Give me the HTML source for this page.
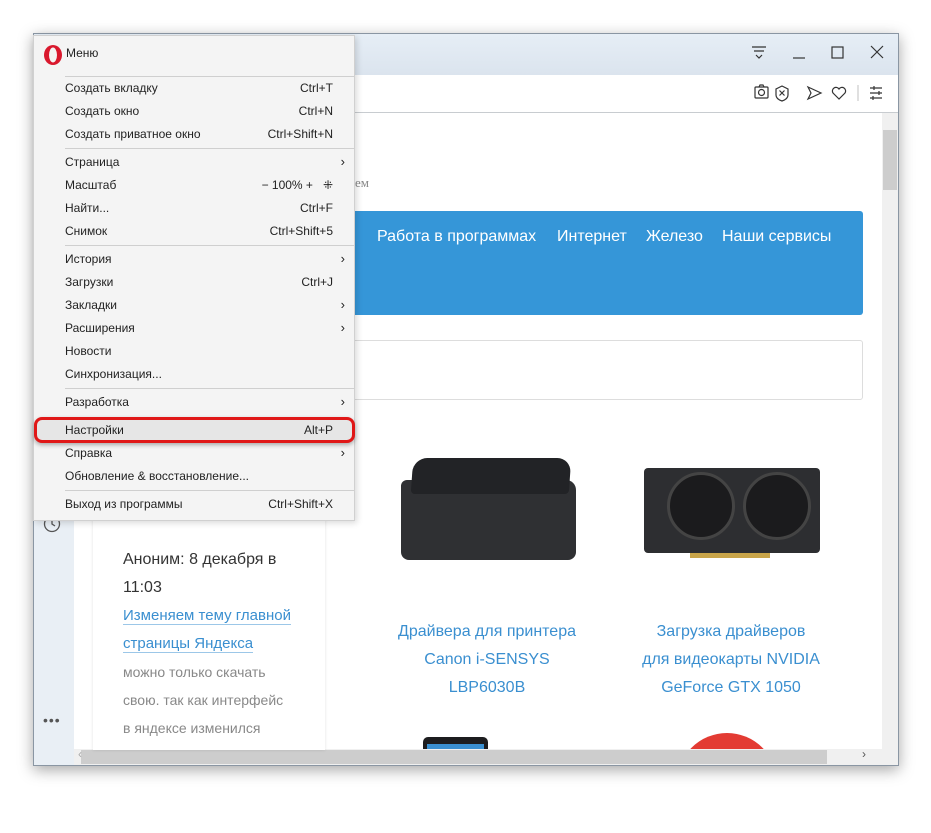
<!DOCTYPE html>
<html><head><meta charset="utf-8"><style>
*{margin:0;padding:0;box-sizing:border-box}
body{width:931px;height:797px;background:#fff;position:relative;overflow:hidden;font-family:"Liberation Sans","Noto Sans CJK SC",sans-serif}
.abs{position:absolute}
.win{left:33px;top:33px;width:866px;height:733px;border:1px solid #8a96a3;box-shadow:0 4px 14px rgba(0,0,0,.35);background:#fff;overflow:hidden}
.title{left:0;top:0;width:864px;height:41px;background:linear-gradient(#e6eef6,#dbe4ee)}
.addr{left:0;top:41px;width:864px;height:38px;background:#fff;border-bottom:1px solid #c8ccd0}
.side{left:0;top:79px;width:40px;height:652px;background:#e9eff5}
.menu{left:33px;top:35px;width:322px;height:486px;background:#f4f4f4;border:1px solid #d0d0d0;box-shadow:2px 2px 6px rgba(0,0,0,.15);font-size:12px;color:#222}
.it{position:absolute;left:31px;right:21px;height:20px;line-height:20px}
.it span{position:absolute;right:0}
.it .ar{right:-12px;font-size:13px}
.sep{position:absolute;left:31px;right:0;height:1px;background:#cfcfcf}
.nav{color:#fff;font-size:16px;top:228px}
.lnk{color:#3a8fd0;font-size:16px;text-align:center;line-height:28px}
</style></head><body>
<div class="abs win">
 <div class="abs title"></div>
 <div class="abs addr"></div>
 <div class="abs side"></div>
 <div class="abs" style="left:848px;top:79px;width:16px;height:653px;background:#f0f0f0"></div>
 <div class="abs" style="left:849px;top:96px;width:14px;height:60px;background:#cdcdcd"></div>
 <div class="abs" style="left:40px;top:715px;width:824px;height:16px;background:#f0f0f0"></div>
 <div class="abs" style="left:47px;top:716px;width:746px;height:14px;background:#cdcdcd"></div>
 <div class="abs" style="left:44px;top:713px;font-size:12px;color:#aaa">‹</div>
 <div class="abs" style="left:828px;top:713px;font-size:12px;color:#555">›</div>
</div>
<svg class="abs" style="left:740px;top:40px" width="150" height="30" fill="none" stroke="#333" stroke-width="1.2">
 <path d="M12 7h14M14 11h10M16 15l3 3 3-3"/>
 <path d="M53 18h12"/>
 <rect x="92" y="7" width="11" height="11"/>
 <path d="M131 6l12 12M143 6l-12 12"/>
</svg>
<svg class="abs" style="left:750px;top:82px" width="140" height="22" fill="none" stroke="#333" stroke-width="1.2">
 <rect x="5" y="5" width="13" height="11" rx="1"/><circle cx="11.5" cy="10.5" r="3"/><path d="M9 5l1-2h3l1 2"/>
 <path d="M32 4l6 3v6c0 3-3 5-6 6c-3-1-6-3-6-6V7z"/><path d="M29.5 8.5l5 5M34.5 8.5l-5 5"/>
 <path d="M58 5l13 6l-13 6l3-6z"/>
 <path d="M89 17l-6-6a3.5 3.5 0 0 1 6-4a3.5 3.5 0 0 1 6 4z"/>
 <path d="M108 3v16" stroke="#ccc"/>
 <path d="M120 6h12M120 11h12M120 16h12M124 4v4M129 9v4M123 14v4"/>
</svg>
<div class="abs" style="left:355px;top:175px;font-family:'Liberation Serif',serif;font-size:13px;color:#888">ем</div>
<div class="abs" style="left:355px;top:211px;width:508px;height:104px;background:#3596d8;border-radius:0 3px 3px 0"></div>
<div class="abs nav" style="left:377px">Работа в программах</div>
<div class="abs nav" style="left:557px">Интернет</div>
<div class="abs nav" style="left:646px">Железо</div>
<div class="abs nav" style="left:722px">Наши сервисы</div>
<div class="abs" style="left:340px;top:340px;width:523px;height:60px;border:1px solid #ddd;border-radius:3px"></div>
<div class="abs" style="left:93px;top:480px;width:232px;height:270px;background:#fff;box-shadow:0 0 3px rgba(0,0,0,.12)"></div>
<div class="abs" style="left:123px;top:546px;font-size:16px;color:#333;line-height:28px">Аноним: 8 декабря в<br>11:03</div>
<div class="abs" style="left:123px;top:602px;font-size:15px;color:#3a8fd0;line-height:28px"><span style="border-bottom:1px solid #9cc7e8">Изменяем тему главной</span><br><span style="border-bottom:1px solid #9cc7e8">страницы Яндекса</span></div>
<div class="abs" style="left:123px;top:658px;font-size:14px;color:#888;line-height:28px">можно только скачать<br>свою. так как интерфейс<br>в яндексе изменился</div>
<svg class="abs" style="left:42px;top:514px" width="20" height="20" fill="none" stroke="#555" stroke-width="1.3"><circle cx="10" cy="10" r="7.5"/><path d="M10 5v5l3 2"/></svg>
<div class="abs" style="left:43px;top:712px;font-size:14px;color:#555;letter-spacing:1px">•••</div>
<div class="abs" style="left:401px;top:480px;width:175px;height:80px;background:#2f3033;border-radius:6px 10px 8px 8px"></div>
<div class="abs" style="left:412px;top:458px;width:158px;height:36px;background:#222326;border-radius:14px 14px 4px 4px;transform:skewX(-4deg)"></div>
<div class="abs" style="left:644px;top:468px;width:176px;height:85px;background:#2d2e31;border-radius:4px"></div>
<div class="abs" style="left:667px;top:472px;width:68px;height:68px;border-radius:50%;background:#1b1b1d;border:3px solid #444"></div>
<div class="abs" style="left:743px;top:472px;width:68px;height:68px;border-radius:50%;background:#1b1b1d;border:3px solid #444"></div>
<div class="abs" style="left:690px;top:553px;width:80px;height:5px;background:#c9a54a"></div>
<div class="abs lnk" style="left:380px;top:618px;width:214px">Драйвера для принтера<br>Canon i-SENSYS<br>LBP6030B</div>
<div class="abs lnk" style="left:625px;top:618px;width:212px">Загрузка драйверов<br>для видеокарты NVIDIA<br>GeForce GTX 1050</div>
<div class="abs" style="left:423px;top:737px;width:65px;height:12px;background:#1d1d1f;border-radius:5px 5px 0 0"></div>
<div class="abs" style="left:427px;top:744px;width:57px;height:5px;background:#3a8fd0"></div>
<div class="abs" style="left:677px;top:733px;width:100px;height:100px;border-radius:50%;background:#e33b33;clip-path:inset(0 0 84px 0)"></div>
<div class="abs menu">
 <svg class="abs" style="left:8px;top:8px" width="22" height="22"><ellipse cx="11" cy="11" rx="9" ry="10" fill="#d9182d"/><ellipse cx="11" cy="11" rx="4" ry="7.5" fill="#f4f4f4"/></svg>
 <div class="it" style="top:7px;left:32px">Меню</div>
 <div class="sep" style="top:40px"></div>
 <div class="it" style="top:42px">Создать вкладку<span>Ctrl+T</span></div>
 <div class="it" style="top:65px">Создать окно<span>Ctrl+N</span></div>
 <div class="it" style="top:88px">Создать приватное окно<span>Ctrl+Shift+N</span></div>
 <div class="sep" style="top:112px"></div>
 <div class="it" style="top:116px">Страница<span class="ar">›</span></div>
 <div class="it" style="top:139px">Масштаб<span>−&nbsp;100%&nbsp;+&nbsp;&nbsp;&nbsp;⁜</span></div>
 <div class="it" style="top:162px">Найти...<span>Ctrl+F</span></div>
 <div class="it" style="top:185px">Снимок<span>Ctrl+Shift+5</span></div>
 <div class="sep" style="top:209px"></div>
 <div class="it" style="top:213px">История<span class="ar">›</span></div>
 <div class="it" style="top:236px">Загрузки<span>Ctrl+J</span></div>
 <div class="it" style="top:259px">Закладки<span class="ar">›</span></div>
 <div class="it" style="top:282px">Расширения<span class="ar">›</span></div>
 <div class="it" style="top:305px">Новости</div>
 <div class="it" style="top:328px">Синхронизация...</div>
 <div class="sep" style="top:352px"></div>
 <div class="it" style="top:356px">Разработка<span class="ar">›</span></div>
 <div class="abs" style="left:0;top:381px;width:321px;height:26px;border:3px solid #e01818;border-radius:8px;background:#e6e6e6;box-shadow:0 2px 4px rgba(0,0,0,.3)"></div>
 <div class="it" style="top:384px">Настройки<span>Alt+P</span></div>
 <div class="it" style="top:407px">Справка<span class="ar">›</span></div>
 <div class="it" style="top:430px">Обновление &amp; восстановление...</div>
 <div class="sep" style="top:454px"></div>
 <div class="it" style="top:458px">Выход из программы<span>Ctrl+Shift+X</span></div>
</div>
</body></html>
